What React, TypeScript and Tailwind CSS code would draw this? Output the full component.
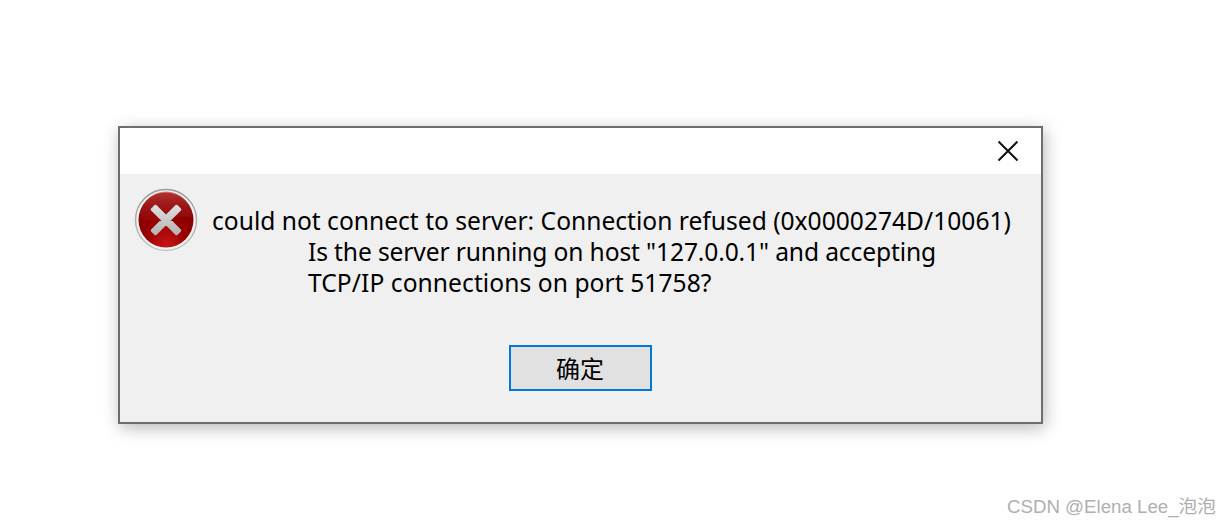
export default function App() {
  return (
    <div className="relative h-[526px] w-[1231px] overflow-hidden bg-white pl-[118px] pt-[126px] font-['Noto_Sans','Noto_Sans_CJK_SC',sans-serif] text-black">
      <div className="flex h-[298px] w-[925px] flex-col border-2 border-[#6d6d6d] bg-[#f0f0f0] shadow-[2px_4px_16px_rgba(0,0,0,0.28)]">
        <div className="flex h-[46px] shrink-0 items-center justify-end bg-white pr-[22px]">
          <svg width="22" height="22" viewBox="0 0 22 22" fill="none" stroke="#111" strokeWidth="2">
            <path d="M1.5 1.5 20.5 20.5M20.5 1.5 1.5 20.5" />
          </svg>
        </div>
        <div className="flex pl-[14px] pt-[14px]">
          <svg width="64" height="64" viewBox="0 0 64 64" className="shrink-0">
            <defs>
              <linearGradient id="ring" x1="0" y1="0" x2="0" y2="1">
                <stop offset="0" stopColor="#9a9a9a" />
                <stop offset="1" stopColor="#c4c4c4" />
              </linearGradient>
              <radialGradient id="red" cx="0.5" cy="0.95" r="0.8">
                <stop offset="0" stopColor="#c8141a" />
                <stop offset="0.5" stopColor="#980000" />
                <stop offset="1" stopColor="#820000" />
              </radialGradient>
              <linearGradient id="gloss" x1="0" y1="0" x2="0" y2="1">
                <stop offset="0" stopColor="#c84a4a" stopOpacity="0.7" />
                <stop offset="1" stopColor="#a01818" stopOpacity="0.25" />
              </linearGradient>
              <linearGradient id="cross" x1="0" y1="0" x2="0" y2="1">
                <stop offset="0" stopColor="#dedede" />
                <stop offset="1" stopColor="#b4b4b4" />
              </linearGradient>
            </defs>
            <circle cx="32" cy="32" r="30.5" fill="#f2f2f2" stroke="url(#ring)" strokeWidth="1.5" />
            <circle cx="32" cy="32" r="27.5" fill="url(#red)" />
            <path d="M5.5 30A26.5 26.5 0 0 1 58.5 30C46 24 18 38 5.5 30Z" fill="url(#gloss)" />
            <path d="M18 21.5 21.5 18 32 28.5 42.5 18 46 21.5 35.5 32 46 42.5 42.5 46 32 35.5 21.5 46 18 42.5 28.5 32Z" fill="url(#cross)" stroke="url(#cross)" strokeWidth="2.5" strokeLinejoin="round" />
          </svg>
          <div className="ml-[14px] pt-[17px] text-[24.6px] leading-[31px]">
            <div className="whitespace-nowrap">could not connect to server: Connection refused (0x0000274D/10061)</div>
            <div className="ml-[96px] whitespace-nowrap tracking-[-0.13px]">Is the server running on host "127.0.0.1" and accepting</div>
            <div className="ml-[96px] whitespace-nowrap tracking-[0.06px]">TCP/IP connections on port 51758?</div>
          </div>
        </div>
        <div className="mt-[47px] flex justify-center pr-[1px]">
          <button className="flex h-[46px] w-[143px] items-center justify-center border-2 border-[#0078d7] bg-[#e1e1e1] pt-[1px] text-[24px]">确定</button>
        </div>
      </div>
      <div className="absolute bottom-[7px] right-[15px] font-['Liberation_Sans','Noto_Sans_CJK_SC',sans-serif] text-[18.7px] leading-[24px] text-[#b0b0b0]">CSDN @Elena Lee_泡泡</div>
    </div>
  );
}
